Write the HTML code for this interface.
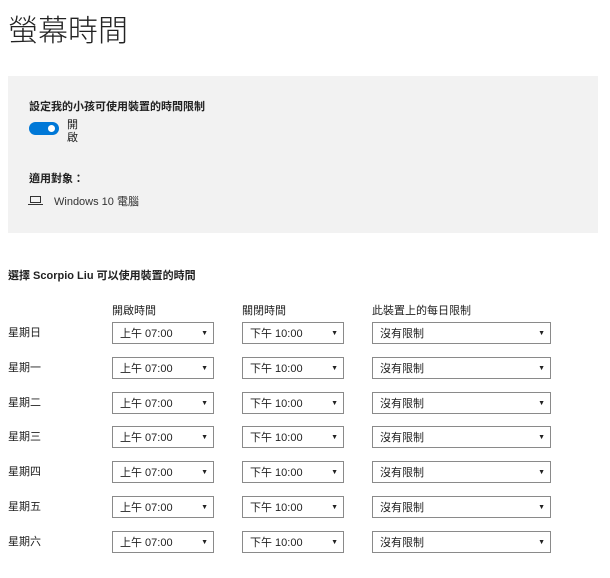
<!DOCTYPE html>
<html><head><meta charset="utf-8"><style>
body{margin:0;width:610px;height:578px;background:#fff;font-family:"Liberation Sans","Noto Sans CJK TC",sans-serif;color:#222;position:relative;overflow:hidden}
.a{position:absolute;white-space:nowrap}
.sel{position:absolute;height:20px;border:1px solid #8a8a8a;background:#fff;font-size:11px;line-height:22px;box-sizing:content-box}
.sel span{position:absolute;left:7px;top:0}
.sel i{position:absolute;right:5px;top:0;font-style:normal;font-size:7px}
.d{font-size:11px}
</style></head><body>
<div class="a" style="left:8px;top:6px;font-size:30px;font-weight:300;color:#222">螢幕時間</div>
<div class="a" style="left:8px;top:76px;width:590px;height:157px;background:#f2f2f2"></div>
<div class="a" style="left:29px;top:98px;font-size:11px;font-weight:bold">設定我的小孩可使用裝置的時間限制</div>
<div class="a" style="left:29px;top:122px;width:30px;height:13px;border-radius:7px;background:#0078d7"></div>
<div class="a" style="left:48px;top:125px;width:7px;height:7px;border-radius:50%;background:#fff"></div>
<div class="a" style="left:67px;top:119px;font-size:11px;line-height:13px">開<br>啟</div>
<div class="a" style="left:29px;top:170px;font-size:11px;font-weight:bold">適用對象：</div>
<svg class="a" style="left:28px;top:194px" width="16" height="12"><rect x="2.5" y="2.5" width="10" height="6" fill="none" stroke="#333"/><line x1="0" y1="10.5" x2="15" y2="10.5" stroke="#333"/></svg>
<div class="a" style="left:54px;top:193px;font-size:11px;color:#333">Windows 10 電腦</div>
<div class="a" style="left:8px;top:267px;font-size:11px;font-weight:bold">選擇 Scorpio Liu 可以使用裝置的時間</div>
<div class="a" style="left:112px;top:302px;font-size:11px">開啟時間</div>
<div class="a" style="left:242px;top:302px;font-size:11px">關閉時間</div>
<div class="a" style="left:372px;top:302px;font-size:11px">此裝置上的每日限制</div>
<div id="rows"></div>
<script>
var days=["星期日","星期一","星期二","星期三","星期四","星期五","星期六"],h="";
for(var i=0;i<7;i++){var y=322+i*34.8;
h+='<div class="a d" style="left:8px;top:'+(y+2)+'px">'+days[i]+'</div>';
h+='<div class="sel" style="left:112px;top:'+y+'px;width:100px"><span>上午 07:00</span><i>▼</i></div>';
h+='<div class="sel" style="left:242px;top:'+y+'px;width:100px"><span>下午 10:00</span><i>▼</i></div>';
h+='<div class="sel" style="left:372px;top:'+y+'px;width:177px"><span>沒有限制</span><i>▼</i></div>';}
document.getElementById("rows").innerHTML=h;
</script>
</body></html>
